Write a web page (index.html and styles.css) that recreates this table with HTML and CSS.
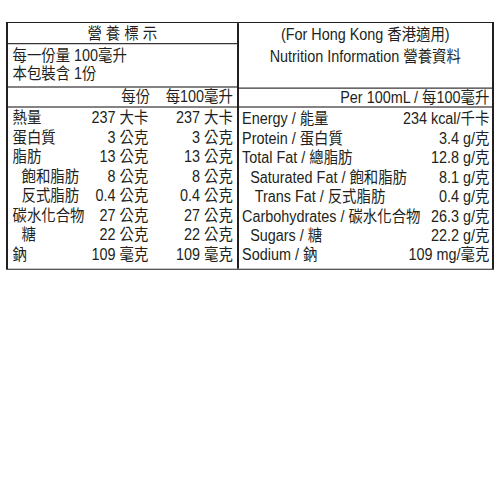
FILE: index.html
```html
<!DOCTYPE html>
<html>
<head>
<meta charset="utf-8">
<link rel="stylesheet" href="styles.css">
</head>
<body>
<div class="label">
  <div class="col left">
    <div class="title">營 養 標 示</div>
    <div class="serving">
      <div>每一份量 100毫升</div>
      <div>本包裝含 1份</div>
    </div>
    <div class="head lhead"><span class="c2">每份</span><span class="c3">每100毫升</span></div>
    <div class="body lbody">
      <span class="n">熱量</span><span class="v">237 大卡</span><span class="v">237 大卡</span>
      <span class="n">蛋白質</span><span class="v">3 公克</span><span class="v">3 公克</span>
      <span class="n">脂肪</span><span class="v">13 公克</span><span class="v">13 公克</span>
      <span class="n sub">飽和脂肪</span><span class="v">8 公克</span><span class="v">8 公克</span>
      <span class="n sub">反式脂肪</span><span class="v">0.4 公克</span><span class="v">0.4 公克</span>
      <span class="n">碳水化合物</span><span class="v">27 公克</span><span class="v">27 公克</span>
      <span class="n sub">糖</span><span class="v">22 公克</span><span class="v">22 公克</span>
      <span class="n">鈉</span><span class="v">109 毫克</span><span class="v">109 毫克</span>
    </div>
  </div>
  <div class="col right">
    <div class="rtitle">
      <div>(For Hong Kong 香港適用)</div>
      <div>Nutrition Information 營養資料</div>
    </div>
    <div class="head rhead">Per 100mL / 每100毫升</div>
    <div class="body rbody">
      <div class="row"><span class="n">Energy / 能量</span><span class="v">234 kcal/千卡</span></div>
      <div class="row"><span class="n">Protein / 蛋白質</span><span class="v">3.4 g/克</span></div>
      <div class="row"><span class="n">Total Fat / 總脂肪</span><span class="v">12.8 g/克</span></div>
      <div class="row"><span class="n sub">Saturated Fat / 飽和脂肪</span><span class="v">8.1 g/克</span></div>
      <div class="row"><span class="n sub trans">Trans Fat / 反式脂肪</span><span class="v">0.4 g/克</span></div>
      <div class="row"><span class="n">Carbohydrates / 碳水化合物</span><span class="v">26.3 g/克</span></div>
      <div class="row"><span class="n sub">Sugars / 糖</span><span class="v">22.2 g/克</span></div>
      <div class="row"><span class="n">Sodium / 鈉</span><span class="v">109 mg/毫克</span></div>
    </div>
  </div>
</div>
</body>
</html>
```
FILE: styles.css
```css
html, body {
  margin: 0;
  padding: 0;
  background: #ffffff;
}
html {
  height: 100%;
}
body {
  box-sizing: border-box;
  min-height: 100%;
  padding: 22px 0 0 6px;
  font-family: "Liberation Sans", Arial, "Noto Sans CJK TC", sans-serif;
  font-size: 14.4px;
  color: #231f20;
}
/* text is drawn taller than wide, as in the printed label */
.label {
  display: flex;
  width: 488px;
  height: 223.2px;
  margin-bottom: 25px;
  border-style: solid;
  border-color: #231f20;
  border-width: 1.8px 2px;
  box-sizing: border-box;
  transform: scaleY(1.1111);
  transform-origin: 0 0;
}
.col {
  display: flex;
  flex-direction: column;
  min-width: 0;
}
.left {
  width: 230.5px;
  flex: none;
  border-right: 2px solid #231f20;
  box-sizing: border-box;
}
.right {
  flex: 1;
}
.title {
  height: 18px;
  line-height: 18px;
  text-align: center;
  border-bottom: 1.8px solid #231f20;
}
.serving {
  height: 37.8px;
  padding: 1.8px 4.5px 0;
  box-sizing: border-box;
  line-height: 16.2px;
}
.rtitle {
  height: 57.6px;
  text-align: center;
  line-height: 19.8px;
  padding-top: 0.9px;
  box-sizing: border-box;
}
.head {
  height: 18.9px;
  line-height: 17.1px;
  border-top: 1.8px solid #231f20;
  border-bottom: 1.8px solid #231f20;
  box-sizing: border-box;
}
.lhead {
  display: grid;
  grid-template-columns: 1fr 64.8px 82.8px;
  padding-right: 3.6px;
}
.lhead .c2 { grid-column: 2; text-align: right; }
.lhead .c3 { grid-column: 3; text-align: right; }
.rhead {
  text-align: right;
  padding-right: 2.7px;
}
.body {
  line-height: 17.46px;
}
.lbody {
  display: grid;
  grid-template-columns: 1fr 63px 84.6px;
  padding: 1.8px 3.6px 0 4.5px;
}
.rbody {
  display: flex;
  flex-direction: column;
  padding: 1.8px 2.7px 0 3.6px;
}
.row {
  display: flex;
  justify-content: space-between;
}
.v { text-align: right; white-space: nowrap; }
.n { white-space: nowrap; }
.lbody .n.sub { padding-left: 9px; }
.rbody .n.sub { padding-left: 8.1px; }
.rbody .n.trans { padding-left: 12.6px; }
```
